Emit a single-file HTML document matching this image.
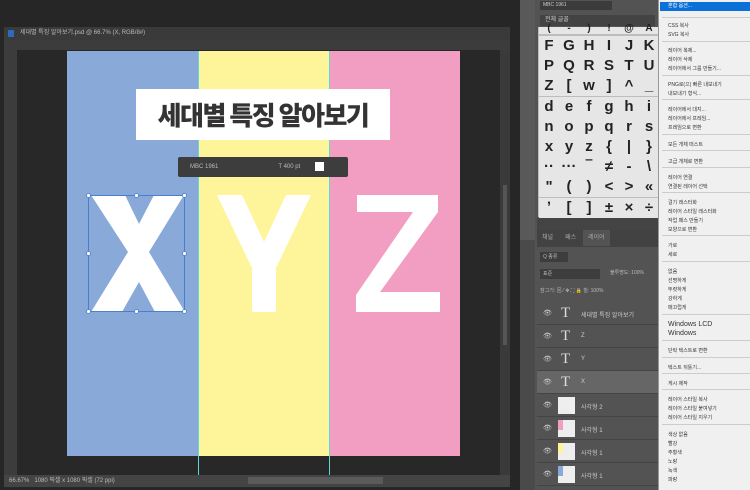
<!DOCTYPE html><html><head><meta charset="utf-8"><style>
*{margin:0;padding:0;box-sizing:border-box}
body{width:750px;height:490px;overflow:hidden;background:#262626;position:relative;font-family:"Liberation Sans","Noto Sans CJK KR",sans-serif}
.a{position:absolute}
.g{position:absolute;width:20px;height:20px;background:#e6e6e6;font:bold 15px "Liberation Sans",sans-serif;color:#222;text-align:center;line-height:20px}
.lr{position:absolute;left:537px;width:121px;height:23px;border-bottom:1px solid #444;background:#535353;color:#ccc;font-size:6px}
.m{position:absolute;left:668px;font-size:6px;color:#333}
.sep{position:absolute;left:662px;width:88px;height:1px;background:#ccc}
</style></head><body>
<div class="a" style="left:4px;top:27px;width:506px;height:461px;background:#282828"></div>
<div class="a" style="left:4px;top:27px;width:506px;height:13px;background:#3a3a3a;color:#bbb;font-size:6px;line-height:13px;padding-left:16px">세대별 특징 알아보기.psd @ 66.7% (X, RGB/8#)</div>
<div class="a" style="left:8px;top:30px;width:6px;height:7px;background:#2a6bbf"></div>
<div class="a" style="left:4px;top:40px;width:506px;height:10px;background:#3c3c3c"></div>
<div class="a" style="left:4px;top:40px;width:13px;height:435px;background:#3c3c3c"></div>
<div class="a" style="left:500px;top:50px;width:10px;height:425px;background:#3a3a3a"></div>
<div class="a" style="left:503px;top:185px;width:4px;height:160px;background:#555"></div>
<div class="a" style="left:4px;top:475px;width:506px;height:12px;background:#444;color:#bbb;font-size:6px;line-height:12px;padding-left:5px">66.67%&nbsp;&nbsp; 1080 픽셀 x 1080 픽셀 (72 ppi)</div>
<div class="a" style="left:248px;top:477px;width:135px;height:7px;background:#5a5a5a"></div>
<div class="a" style="left:67px;top:51px;width:131px;height:405px;background:#89a9d8"></div>
<div class="a" style="left:198px;top:51px;width:131px;height:405px;background:#fef59a"></div>
<div class="a" style="left:329px;top:51px;width:131px;height:405px;background:#f19ec2"></div>
<div class="a" style="left:198px;top:51px;width:1px;height:424px;background:#5fd8d8"></div>
<div class="a" style="left:329px;top:51px;width:1px;height:424px;background:#5fd8d8"></div>
<div class="a" style="left:136px;top:89px;width:254px;height:51px;background:#fff;color:#333;font:900 26px 'Noto Sans CJK KR',sans-serif;text-align:center;line-height:51px;letter-spacing:-1.5px">세대별 특징 알아보기</div>
<div class="a" style="left:178px;top:157px;width:170px;height:20px;background:#3d3d3d;border-radius:2px;color:#bbb;font-size:6px;line-height:20px"><span style="margin-left:12px">MBC 1961</span><span style="margin-left:60px">T 400 pt</span></div>
<div class="a" style="left:315px;top:162px;width:9px;height:9px;background:#fff"></div>
<svg class="a" style="left:67px;top:180px" width="393" height="150">
<g fill="#fff">
<polygon points="24,15 58,15 72,44 87,15 117,15 82,72 118,132 88,132 72,102 55,132 24,132 61,72"/>
<polygon points="150,15 175,15 197,62 219,15 244,15 209,88 209,132 185,132 185,88"/>
<polygon points="290,15 371,15 371,32 313,112 373,112 373,132 289,132 289,115 346,32 290,32"/>
</g>
<rect x="21.5" y="15.5" width="96" height="116" fill="none" stroke="#4a7fd0" stroke-width="1"/>
<g fill="#fff" stroke="#4a7fd0" stroke-width="0.8">
<circle cx="21.5" cy="15.5" r="2"/><circle cx="69.5" cy="15.5" r="2"/><circle cx="117.5" cy="15.5" r="2"/>
<circle cx="21.5" cy="73.5" r="2"/><circle cx="117.5" cy="73.5" r="2"/>
<circle cx="21.5" cy="131.5" r="2"/><circle cx="69.5" cy="131.5" r="2"/><circle cx="117.5" cy="131.5" r="2"/></g>
</svg>
<div class="a" style="left:520px;top:0;width:15px;height:490px;background:#4a4a4a"></div>
<div class="a" style="left:520px;top:0;width:15px;height:240px;background:#595959"></div>
<div class="a" style="left:535px;top:0;width:123px;height:490px;background:#535353"></div>
<div class="a" style="left:540px;top:1px;width:72px;height:9px;background:#3b3b3b;color:#ccc;font-size:5px;line-height:9px;padding-left:3px">MBC 1961</div>
<div class="a" style="left:540px;top:15px;width:115px;height:11px;background:#434343;color:#ccc;font-size:6px;line-height:11px;padding-left:5px">전체 글꼴</div>
<div class="a" style="left:538px;top:27px;width:120px;height:190px;background:#bdbdbd"></div>
<div id="gl"></div>
<div class="a" style="left:537px;top:218px;width:121px;height:12px;background:#444"></div>
<div class="a" style="left:537px;top:230px;width:121px;height:17px;background:#424242;color:#aaa;font-size:6px;line-height:17px"><span style="margin-left:5px">채널</span><span style="margin-left:12px">패스</span><span style="background:#535353;padding:5px 5px;margin-left:7px">레이어</span></div>
<div class="a" style="left:540px;top:252px;width:28px;height:10px;background:#3d3d3d;color:#bbb;font-size:5px;line-height:10px;padding-left:3px">Q 종류</div>
<div class="a" style="left:540px;top:269px;width:60px;height:10px;background:#3d3d3d;color:#bbb;font-size:5px;line-height:10px;padding-left:3px">표준</div>
<div class="a" style="left:610px;top:269px;color:#bbb;font-size:5px">불투명도: 100%</div>
<div class="a" style="left:540px;top:287px;color:#bbb;font-size:5px">잠그기: ⊠ ⁄ ✥ ⛶ 🔒 칠: 100%</div>
<div id="ly"></div>
<div class="a" style="left:658px;top:0;width:92px;height:490px;background:#f0f0f0;border-left:1px solid #999"></div>
<div class="a" style="left:660px;top:2px;width:90px;height:9px;background:#0b70d8;color:#fff;font-size:5px;line-height:9px;padding-left:8px">혼합 옵션...</div>
<div id="mn"></div>
<script>
var gl=["F G H I J K","P Q R S T U","Z [ w ] ^ _","d e f g h i","n o p q r s","x y z { | }","·· ··· ‾ ≠ - \\","\" ( ) < > «","ʼ [ ] ± × ÷"],h="";
for(var c=0;c<6;c++)h+='<div class="g" style="left:'+(539+c*20)+'px;top:27px;height:7px;line-height:4px;font-size:10px">'+"(-)!@A"[c]+'</div>';
gl.forEach(function(r,i){r.split(" ").forEach(function(ch,c){h+='<div class="g" style="left:'+(539+c*20)+'px;top:'+(36+i*20.2)+'px">'+ch.replace("<","&lt;").replace(">","&gt;")+'</div>'})});
document.getElementById("gl").innerHTML=h;
var L=[["T","세대별 특징 알아보기"],["T","Z"],["T","Y"],["T","X"],["i","사각형 2",""],["i","사각형 1","#f19ec2"],["i","사각형 1","#fef59a"],["i","사각형 1","#89a9d8"]];h="";
L.forEach(function(l,i){var y=302+i*23;h+='<div class="lr" style="top:'+y+'px;'+(i==3?'background:#666':'')+'"><span style="position:absolute;left:6px;top:7px;font-size:7px">👁</span>'+(l[0]=="T"?'<span style="position:absolute;left:24px;top:3px;font:15px Liberation Serif,serif;color:#ddd">T</span>':'<span style="position:absolute;left:21px;top:3px;width:17px;height:17px;background:#eee"></span>'+(l[2]?'<span style="position:absolute;left:21px;top:3px;width:5px;height:10px;background:'+l[2]+'"></span>':''))+'<span style="position:absolute;left:44px;top:8px">'+l[1]+'</span></div>'});
document.getElementById("ly").innerHTML=h;
var M=[[22,"CSS 복사"],[31,"SVG 복사"],[47,"레이어 복제..."],[56,"레이어 삭제"],[65,"레이어에서 그룹 만들기..."],[81,"PNG로(으) 빠른 내보내기"],[90,"내보내기 형식..."],[106,"레이어에서 대지..."],[115,"레이어에서 프레임..."],[124,"프레임으로 변환"],[141,"모든 개체 떠스트"],[158,"고급 개체로 변환"],[174,"레이어 연결"],[183,"연결된 레이어 선택"],[199,"걸기 래스터화"],[208,"레이어 스타일 래스터화"],[217,"작업 패스 만들기"],[226,"모양으로 변환"],[242,"가로"],[251,"세로"],[268,"없음"],[277,"선명하게"],[286,"뚜렷하게"],[295,"강하게"],[304,"매끄럽게"],[321,"Windows LCD"],[330,"Windows"],[347,"단락 텍스트로 변환"],[364,"텍스트 뒤틀기..."],[380,"게시 제작"],[396,"레이어 스타일 복사"],[405,"레이어 스타일 붙여넣기"],[414,"레이어 스타일 지우기"],[431,"색상 없음"],[440,"빨강"],[449,"주황색"],[458,"노랑"],[467,"녹색"],[476,"파랑"]];h="";
M.forEach(function(m){h+='<div class="m" style="top:'+m[0]+'px;font-size:'+(m[1].indexOf("Windows")==0?7:5)+'px">'+m[1]+'</div>'});
[17,41,75,99,134,150,167,192,235,261,314,340,357,373,389,424].forEach(function(y){h+='<div class="sep" style="top:'+y+'px"></div>'});
document.getElementById("mn").innerHTML=h;
</script>
</body></html>
